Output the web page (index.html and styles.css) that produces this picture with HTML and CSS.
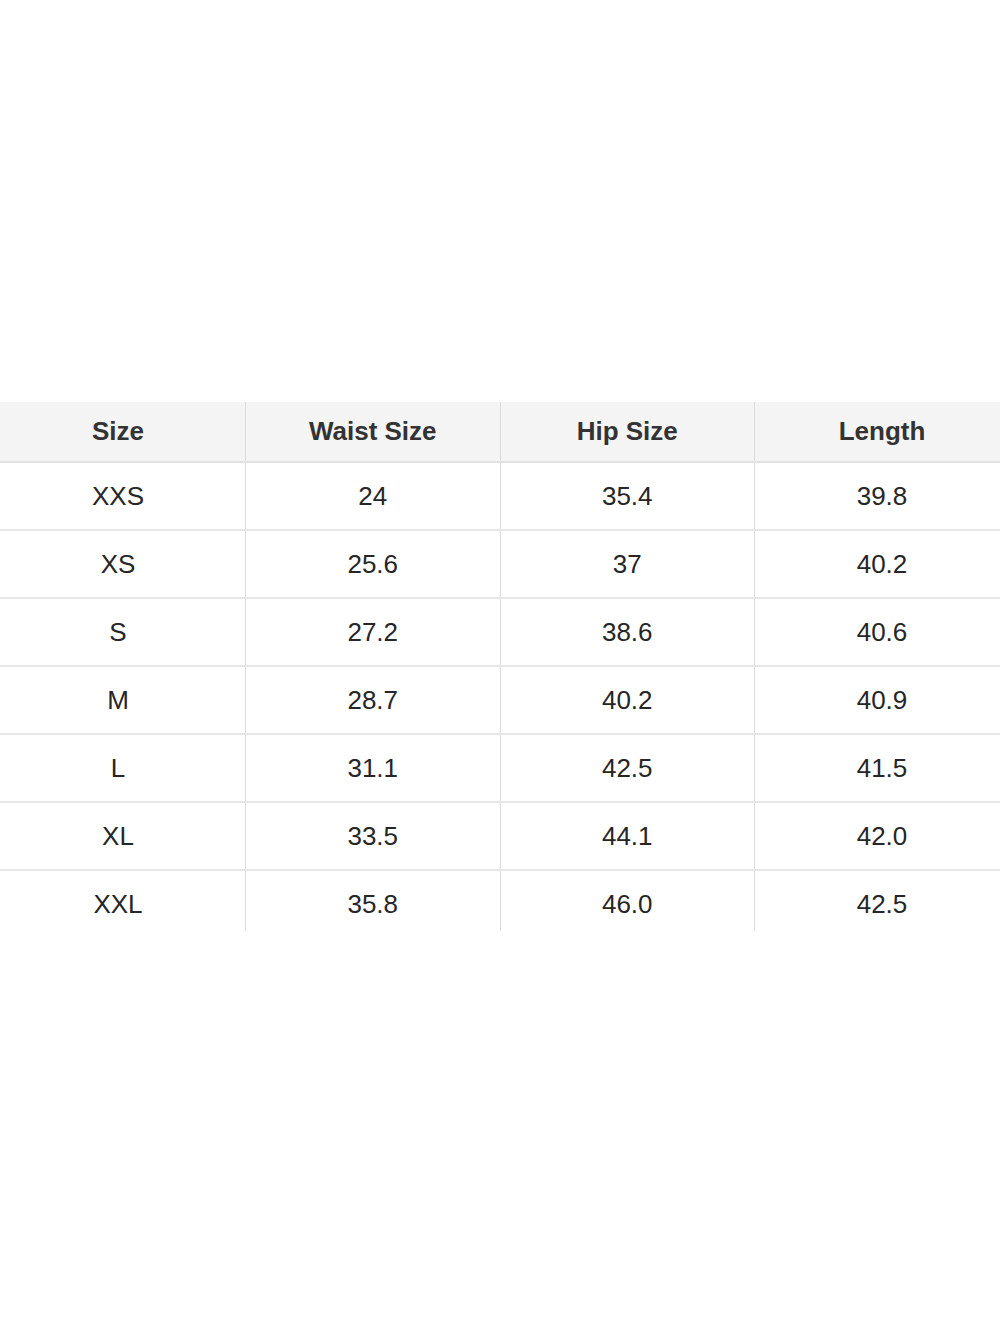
FILE: index.html
```html
<!DOCTYPE html>
<html>
<head>
<meta charset="utf-8">
<link rel="stylesheet" href="styles.css">
</head>
<body>
<div class="page">
  <table class="chart">
    <thead>
      <tr><th>Size</th><th>Waist Size</th><th>Hip Size</th><th>Length</th></tr>
    </thead>
    <tbody>
      <tr><td>XXS</td><td>24</td><td>35.4</td><td>39.8</td></tr>
      <tr><td>XS</td><td>25.6</td><td>37</td><td>40.2</td></tr>
      <tr><td>S</td><td>27.2</td><td>38.6</td><td>40.6</td></tr>
      <tr><td>M</td><td>28.7</td><td>40.2</td><td>40.9</td></tr>
      <tr><td>L</td><td>31.1</td><td>42.5</td><td>41.5</td></tr>
      <tr><td>XL</td><td>33.5</td><td>44.1</td><td>42.0</td></tr>
      <tr><td>XXL</td><td>35.8</td><td>46.0</td><td>42.5</td></tr>
    </tbody>
  </table>
</div>
</body>
</html>
```
FILE: styles.css
```css
html, body {
  margin: 0;
  padding: 0;
  background: #ffffff;
  overflow: hidden;
}
.page {
  width: 1000px;
  height: 1333px;
  padding-top: 402px;
  box-sizing: border-box;
  overflow: hidden;
}
.chart {
  margin-left: -9px;
  width: 1018px;
  border-collapse: collapse;
  table-layout: fixed;
  font-family: "Liberation Sans", Arial, sans-serif;
  font-size: 26px;
  color: #262626;
}
.chart th, .chart td {
  text-align: center;
  padding: 0;
  border-left: 1px solid #dcdcdc;
}
.chart th:first-child, .chart td:first-child {
  border-left: none;
}
.chart th {
  height: 59px;
  background: #f4f4f4;
  font-weight: bold;
  color: #333333;
  border-bottom: 2px solid #e2e2e2;
}
.chart td {
  height: 66px;
  border-bottom: 2px solid #e6e6e6;
}
.chart tbody tr:last-child td {
  border-bottom: none;
  height: 53px;
  padding-top: 7px;
}
```
